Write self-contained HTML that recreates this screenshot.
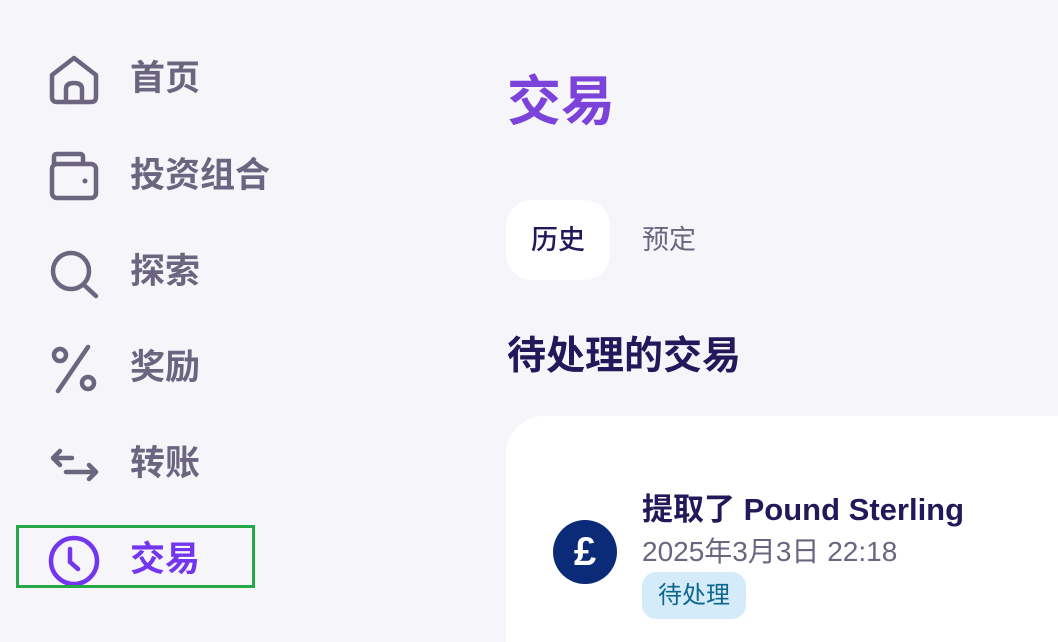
<!DOCTYPE html>
<html><head><meta charset="utf-8"><style>
*{margin:0;padding:0;box-sizing:border-box}
html,body{width:1058px;height:642px;overflow:hidden}
body{background:#f6f5fa;font-family:"Liberation Sans","Noto Sans CJK SC",sans-serif;position:relative}
.nav{position:absolute;left:130px;font-size:35px;font-weight:700;color:#6b6580;line-height:40px}
.ic{position:absolute;left:46px}
</style></head><body>
<svg class="ic" style="top:55px" width="56" height="50" viewBox="0 0 56 50" fill="none" stroke="#6b6580" stroke-width="4.5" stroke-linejoin="round" stroke-linecap="round"><path d="M6 20 L28 3 L50 20 V42 Q50 47 45 47 H11 Q6 47 6 42 Z"/><path d="M20 47 V34 Q20 28 28 28 Q36 28 36 34 V47"/></svg>
<div class="nav" style="top:59px">首页</div>
<svg class="ic" style="top:150px" width="56" height="52" viewBox="0 0 56 52" fill="none" stroke="#6b6580" stroke-width="4.5" stroke-linejoin="round"><path d="M8 14 V7 Q8 4 11 4 H34 Q37 4 37 7 V14"/><rect x="6" y="14" width="44" height="34" rx="5"/><circle cx="39" cy="31" r="2.5" fill="#6b6580" stroke="none"/></svg>
<div class="nav" style="top:156px">投资组合</div>
<svg class="ic" style="top:248px" width="56" height="52" viewBox="0 0 56 52" fill="none" stroke="#6b6580" stroke-width="4.5" stroke-linecap="round"><circle cx="25" cy="23" r="18"/><path d="M38 37 L50 48"/></svg>
<div class="nav" style="top:252px">探索</div>
<svg class="ic" style="top:343px" width="56" height="52" viewBox="0 0 56 52" fill="none" stroke="#6b6580" stroke-width="4.5" stroke-linecap="round"><circle cx="14" cy="12" r="6"/><circle cx="42" cy="40" r="6"/><path d="M42 4 L12 48"/></svg>
<div class="nav" style="top:348px">奖励</div>
<svg class="ic" style="top:446px" width="56" height="40" viewBox="0 0 56 40" fill="none" stroke="#6b6580" stroke-width="4.5" stroke-linecap="round" stroke-linejoin="round"><path d="M26 12 H7 M14 5 L7 12 L14 19"/><path d="M20 26 H50 M43 19 L50 26 L43 33"/></svg>
<div class="nav" style="top:444px">转账</div>
<svg class="ic" style="top:534px" width="56" height="54" viewBox="0 0 56 54" fill="none" stroke="#7336ee" stroke-width="4.5" stroke-linecap="round"><circle cx="28" cy="27" r="23"/><path d="M24 15 V28 L32 35"/></svg>
<div class="nav" style="top:540px;color:#7336ee">交易</div>
<div style="position:absolute;left:16px;top:525px;width:239px;height:63px;border:3px solid #25a847"></div>

<div style="position:absolute;left:507px;top:70px;font-size:54px;font-weight:700;color:#7b43d9;line-height:64px">交易</div>
<div style="position:absolute;left:506px;top:200px;width:104px;height:80px;background:#fff;border-radius:26px;font-size:27px;color:#24175a;text-align:center;line-height:80px;font-weight:500">历史</div>
<div style="position:absolute;left:642px;top:200px;font-size:27px;color:#6b6580;line-height:80px">预定</div>
<div style="position:absolute;left:507px;top:333px;font-size:39px;font-weight:700;color:#24175a;line-height:48px">待处理的交易</div>
<div style="position:absolute;left:506px;top:416px;width:552px;height:226px;background:#fff;border-radius:38px 0 0 0"></div>
<div style="position:absolute;left:553px;top:520px;width:64px;height:64px;border-radius:50%;background:#0b2b78;color:#fff;font-size:40px;font-weight:700;text-align:center;line-height:64px">£</div>
<div style="position:absolute;left:642px;top:490px;font-size:31px;font-weight:700;color:#24175a;line-height:40px">提取了 Pound Sterling</div>
<div style="position:absolute;left:642px;top:535px;font-size:28px;color:#6b6580;line-height:34px">2025年3月3日 22:18</div>
<div style="position:absolute;left:642px;top:572px;width:104px;height:47px;background:#d4ecf9;border-radius:14px;font-size:24px;color:#0d6690;text-align:center;line-height:47px">待处理</div>
</body></html>
